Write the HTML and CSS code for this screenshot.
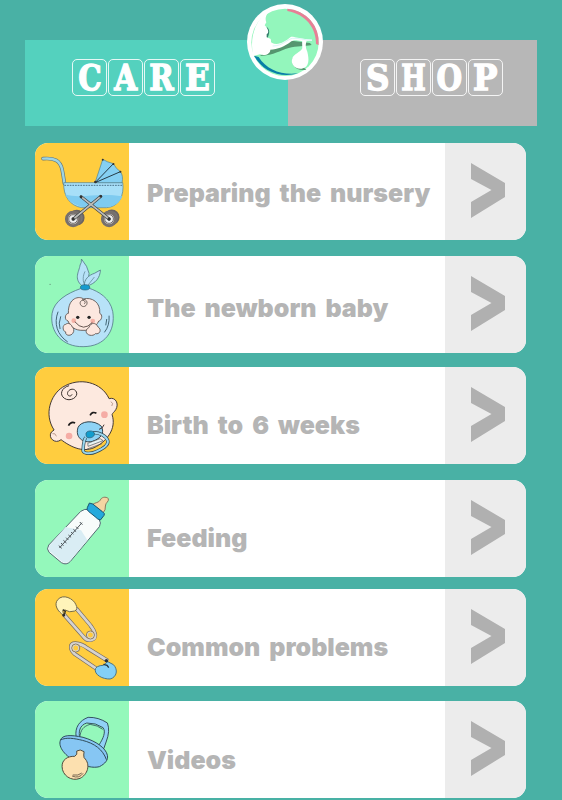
FILE: index.html
```html
<!DOCTYPE html>
<html lang="en">
<head>
    <meta charset="UTF-8">
    <meta name="viewport" content="width=device-width, initial-scale=1.0">
    <title>Baby Care</title>
    <link rel="stylesheet" href="styles.css">
</head>
<body>
    <!-- Tabs -->
    <header class="tabs">
        <a class="tab care"><span class="block"><b>C</b></span><span class="block"><b>A</b></span><span class="block"><b>R</b></span><span class="block"><b class="wide">E</b></span></a>
        <a class="tab shop"><span class="block"><b class="wide">S</b></span><span class="block"><b class="narrow">H</b></span><span class="block"><b>O</b></span><span class="block"><b class="wide">P</b></span></a>
        <svg class="logo" viewBox="21 12 228 228">
            <circle cx="135" cy="126" r="114" fill="#fff"/>
            <circle cx="135" cy="127" r="101" fill="#93f6bc"/>
            <path d="M142 26A101 101 0 0 1 236 135L228 132C229 85 198 43 142 33z" fill="#e87f96"/>
            <path d="M42 167C67 213 120 235 174 220C125 226 80 210 56 171z" fill="#087fa8"/>
            <path d="M60 168C105 166 118 151 146 144C171 137 192 140 215 135L210 129L155 122L85 148z" fill="#55966f"/>
            <path d="M158 174C150 193 170 216 199 209L181 195z" fill="#55966f"/>
            <path d="M80 80C94 91 85 107 82 116L75 109z" fill="#347c6b"/>
            <path d="M100 27C80 35 73 54 79 67L74 76C84 86 89 97 80 103L80 112L91 116C95 121 91 126 95 128C113 138 135 126 151 112C158 107 165 116 216 119L216 122L184 123C170 121 163 118 154 124C134 140 112 149 91 149C91 161 76 169 60 163L40 168C26 110 49 47 100 27z" fill="#fff"/>
            <path d="M98 138C128 138 144 116 158 115C175 113 192 121 216 120M188 122L190 146" fill="none" stroke="#d9f6f6" stroke-width="3"/>
            <path d="M187 121L200 122C195 136 198 145 202 155C207 176 210 201 185 206C163 208 151 191 157 175C161 162 181 157 187 145z" fill="#fff"/>
        </svg>
    </header>

    <!-- Topic list -->
    <main class="list">
        <a class="item first">
            <svg class="icon yellow" viewBox="13 15 283 291">
                <path d="M37 62C72 59 88 68 94 94C98 112 99 125 101 136" fill="none" stroke="#64767c" stroke-width="11" stroke-linecap="round"/>
                <path d="M37 62C72 59 88 68 94 94C98 112 99 125 101 136" fill="none" stroke="#9ed4e3" stroke-width="7" stroke-linecap="round"/>
                <circle cx="138" cy="239" r="21" fill="#777" stroke="#6c6460" stroke-width="5"/>
                <circle cx="243" cy="238" r="21" fill="#777" stroke="#6c6460" stroke-width="5"/>
                <g fill="#c7c5c3" stroke="#77706d">
                    <circle cx="127" cy="243" r="20" stroke-width="9"/>
                    <circle cx="235" cy="243" r="20" stroke-width="9"/>
                    <circle cx="127" cy="243" r="13" fill="#eee" stroke-width="3"/>
                    <circle cx="235" cy="243" r="13" fill="#eee" stroke-width="3"/>
                </g>
                <g stroke="#4d7e91" stroke-width="2">
                    <path d="M99 134H276C281 172 265 207 227 209H153C117 203 97 174 99 134z" fill="#a7dff8"/>
                    <path d="M103 169C150 184 199 163 275 175C268 194 250 207 227 207H154C129 200 111 188 103 169z" fill="#7ecbf0" stroke="none"/>
                    <path d="M193 134L216 64Q228 72 248 77Q256 93 269 101Q278 113 274 134z" fill="#85d0f3"/>
                    <path d="M193 134L248 77M193 134L269 101" stroke="#263c48" stroke-width="3"/>
                </g>
                <path d="M101 142H275" stroke="#4c718b" stroke-width="3" stroke-dasharray="5 3"/>
                <g stroke-linecap="round">
                    <path d="M151 176L235 243M210 175L128 243" stroke="#3e4446" stroke-width="9"/>
                    <path d="M151 176L235 243M210 175L128 243" stroke="#bebdb8" stroke-width="5"/>
                </g>
                <g fill="#333">
                    <circle cx="151" cy="177" r="4"/><circle cx="210" cy="175" r="4"/>
                    <circle cx="194" cy="132" r="4"/><circle cx="216" cy="65" r="3"/>
                    <circle cx="248" cy="78" r="3"/><circle cx="269" cy="101" r="3"/>
                    <circle cx="127" cy="243" r="5"/><circle cx="235" cy="243" r="5"/>
                </g>
            </svg>
            <span class="label">Preparing the nursery</span>
            <span class="arrow"><svg viewBox="0 0 34 55"><path d="M0 0L34 20V34L0 55V39L20.500 27L0 16z"/></svg></span>
        </a>

        <a class="item second">
            <svg class="icon green" viewBox="13 18 283 291">
                <g fill="#b7e2f8" stroke="#557c89" stroke-width="2.500">
                    <path d="M154 108C128 85 145 66 148 45Q153 39 152 27Q171 49 175 70Q174 92 166 108z"/>
                    <path d="M161 108C159 88 175 75 191 70L209 60C208 83 195 100 169 108z"/>
                    <path d="M149 116C109 130 70 153 64 190C56 246 95 291 157 290C223 290 255 242 246 185C238 143 202 124 176 115z"/>
                </g>
                <path d="M163 107C155 94 156 77 163 64M172 105L191 81" fill="none" stroke="#557c89" stroke-width="2"/>
                <ellipse cx="163" cy="112" rx="14" ry="8" fill="#179bce" stroke="#28627b" stroke-width="2"/>
                <path d="M82 185C68 221 80 255 111 276M90 199Q82 221 88 237M235 197Q237 227 221 247M228 207L225 226" fill="none" stroke="#426675" stroke-width="3"/>
                <g fill="#fce7df" stroke="#584c48" stroke-width="2.500">
                    <path d="M113 190C111 142 147 137 158 147C183 140 210 157 207 190C217 194 213 212 204 213C194 234 177 242 157 241C133 242 118 230 112 213C100 210 102 191 113 190z"/>
                    <path d="M105 223C111 217 122 222 124 230C130 234 131 244 126 250C119 260 102 256 105 246C94 243 95 223 105 223z"/>
                    <path d="M178 226C185 216 197 220 202 231C214 239 207 254 194 251C187 260 167 257 166 244C166 237 172 235 174 233z"/>
                </g>
                <path d="M154 148C170 145 174 164 162 169C151 173 143 158 152 152C160 148 168 157 160 162" fill="none" stroke="#544944" stroke-width="2.500"/>
                <circle cx="129" cy="212" r="7" fill="#f5b1a6"/><circle cx="186" cy="213" r="7" fill="#f5b1a6"/>
                <circle cx="141" cy="202" r="5" fill="#252525"/><circle cx="175" cy="202" r="5" fill="#252525"/>
                <path d="M132 215Q158 247 185 217" fill="none" stroke="#493b36" stroke-width="2.500"/>
                <circle cx="58" cy="103" r="2" fill="#658f79"/>
            </svg>
            <span class="label">The newborn baby</span>
            <span class="arrow"><svg viewBox="0 0 34 55"><path d="M0 0L34 20V34L0 55V39L20.500 27L0 16z"/></svg></span>
        </a>

        <a class="item third">
            <svg class="icon yellow" viewBox="13 15 283 291">
                <path d="M95 76C147 43 213 61 235 110C254 104 266 125 255 143C251 150 245 153 244 158C258 200 228 239 190 257C153 273 116 252 91 233C73 248 50 227 62 210L70 204C39 157 59 100 95 76z" fill="#fde9df" stroke="#453a35" stroke-width="3"/>
                <path d="M115 71C92 77 85 98 101 109C118 121 144 105 137 90C129 73 106 85 111 98C114 104 122 103 124 97" fill="none" stroke="#39302c" stroke-width="3"/>
                <path d="M113 191Q121 177 133 183M178 160Q185 147 197 154" fill="none" stroke="#1d1b1b" stroke-width="5"/>
                <circle cx="115" cy="222" r="10" fill="#f5aca5"/><circle cx="221" cy="158" r="10" fill="#f5aca5"/>
                <path d="M65 215Q74 212 77 223M240 119Q250 123 243 132" fill="none" stroke="#9b7468" stroke-width="2"/>
                <path d="M142 196C150 177 190 172 212 193C222 214 211 229 185 238C156 245 132 225 142 196z" fill="#8fd3f5" stroke="#31434c" stroke-width="3"/>
                <path d="M205 202Q216 200 220 188" fill="none" stroke="#433" stroke-width="3"/>
                <path d="M165 226C157 238 158 253 157 267C161 277 184 275 196 269C217 260 235 249 231 236C226 222 207 211 187 212" fill="none" stroke="#2e4652" stroke-width="10"/>
                <path d="M165 226C157 238 158 253 157 267C161 277 184 275 196 269C217 260 235 249 231 236C226 222 207 211 187 212" fill="none" stroke="#9bd7ef" stroke-width="6"/>
                <path d="M171 244L208 230L217 236L172 253zM169 261L214 245" fill="#e9f3f5" stroke="#4a5559" stroke-width="2"/>
                <path d="M166 214C168 205 188 204 191 214C192 224 182 229 171 227C166 224 165 219 166 214z" fill="#129dcd" stroke="#285367" stroke-width="2"/>
            </svg>
            <span class="label">Birth to 6 weeks</span>
            <span class="arrow"><svg viewBox="0 0 34 55"><path d="M0 0L34 20V34L0 55V39L20.500 27L0 16z"/></svg></span>
        </a>

        <a class="item fourth">
            <svg class="icon green" viewBox="13 18 283 291">
                <path d="M150 112Q162 103 174 107L204 133Q213 148 206 158L119 262Q107 275 92 266L55 235Q46 225 54 213z" fill="#f8fcfb" stroke="#526872" stroke-width="3"/>
                <path d="M104 159L151 169L170 199L118 260Q106 271 94 263L57 232Q50 224 57 214z" fill="#d9edf4"/>
                <path d="M186 91C194 85 203 87 209 78C211 70 225 66 233 74C235 84 224 85 224 96Q225 109 217 116z" fill="#f4d5a2" stroke="#8a785f" stroke-width="3"/>
                <path d="M176 87Q187 88 196 98L215 113Q224 119 220 124L209 138Q201 137 193 128L173 112Q166 106 170 100z" fill="#25a9dc" stroke="#1c536e" stroke-width="3"/>
                <path d="M86 222L154 146M84 215L93 223M91 207L98 215M98 199L107 207M106 191L113 198M113 183L121 190M121 174L128 181M128 166L136 173M136 158L143 165M147 144L155 152" fill="none" stroke="#4f575c" stroke-width="3"/>
            </svg>
            <span class="label">Feeding</span>
            <span class="arrow"><svg viewBox="0 0 34 55"><path d="M0 0L34 20V34L0 55V39L20.500 27L0 16z"/></svg></span>
        </a>

        <a class="item fifth">
            <svg class="icon yellow" viewBox="13 15 283 291">
                <path d="M99 91L158 158C171 175 197 169 193 150C191 139 184 132 179 124L136 73" fill="none" stroke="#756c65" stroke-width="12"/>
                <path d="M99 91L158 158C171 175 197 169 193 150C191 139 184 132 179 124L136 73" fill="none" stroke="#d6d3d0" stroke-width="8"/>
                <circle cx="179" cy="153" r="12" fill="#ffcb3d" stroke="#827970" stroke-width="3"/>
                <circle cx="179" cy="153" r="9" fill="none" stroke="#d6d3d0" stroke-width="3"/>
                <path d="M99 94C81 83 68 62 81 47C97 28 128 44 135 61Q143 76 132 81Q116 87 103 78L96 80z" fill="#fff4ba" stroke="#756b48" stroke-width="3"/>
                <path d="M96 77L104 82L99 95" fill="none" stroke="#39362b" stroke-width="4"/><circle cx="99" cy="94" r="4" fill="#302e29"/>
                <path d="M200 256L132 210C117 196 116 178 134 178C145 179 159 184 169 192L232 231" fill="none" stroke="#756c65" stroke-width="12"/>
                <path d="M200 256L132 210C117 196 116 178 134 178C145 179 159 184 169 192L232 231" fill="none" stroke="#d6d3d0" stroke-width="8"/>
                <circle cx="135" cy="192" r="12" fill="#ffcb3d" stroke="#827970" stroke-width="3"/>
                <circle cx="135" cy="192" r="9" fill="none" stroke="#d6d3d0" stroke-width="3"/>
                <path d="M194 254C189 272 216 286 238 285C258 280 263 257 248 242L231 233L217 244Q208 244 200 248z" fill="#83d0f7" stroke="#4c7686" stroke-width="3"/>
                <path d="M218 241L229 244L234 251M222 229L230 233" fill="none" stroke="#263943" stroke-width="4"/><circle cx="227" cy="230" r="5" fill="#28323a"/>
            </svg>
            <span class="label">Common problems</span>
            <span class="arrow"><svg viewBox="0 0 34 55"><path d="M0 0L34 20V34L0 55V39L20.500 27L0 16z"/></svg></span>
        </a>

        <a class="item sixth">
            <svg class="icon green" viewBox="13 18 283 291">
                <path d="M136 125C132 97 146 77 172 67Q203 66 230 84Q239 108 226 141L219 161L204 151C218 130 226 110 217 98Q195 83 168 84C146 91 143 110 147 130z" fill="#91d1f6" stroke="#355461" stroke-width="3"/>
                <path d="M147 129C149 104 158 94 178 88Q202 91 216 103" fill="none" stroke="#355461" stroke-width="2.500"/>
                <path d="M89 136C94 119 120 119 157 127C196 138 226 160 230 181C233 195 223 206 206 215C187 220 162 214 137 201C105 184 81 157 89 136z" fill="#86c6f3" stroke="#304d5a" stroke-width="3"/>
                <path d="M89 135C107 126 130 130 155 136C191 145 216 163 227 194" fill="none" stroke="#304d5a" stroke-width="3"/>
                <path d="M138 168Q148 161 160 170Q158 181 160 188C182 209 169 240 148 250C121 261 94 240 94 215C93 194 111 183 132 184Q141 179 138 168z" fill="#fce0af" stroke="#514b3e" stroke-width="3"/>
                <path d="M124 243Q145 252 157 235M126 240Q143 243 153 234" fill="none" stroke="#5f5140" stroke-width="2.500"/>
            </svg>
            <span class="label">Videos</span>
            <span class="arrow"><svg viewBox="0 0 34 55"><path d="M0 0L34 20V34L0 55V39L20.500 27L0 16z"/></svg></span>
        </a>
    </main>
</body>
</html>
```
FILE: styles.css
```css
* {
    box-sizing: border-box;
}

body {
    margin: 0;
    height: 800px;
    padding: 40px 25px 0;
    background: #49b1a5;
    font-family: Inter, "Liberation Sans", Arial, sans-serif;
    overflow: hidden;
}

.tabs {
    position: relative;
    display: flex;
    height: 86px;
}

.tab {
    display: flex;
    gap: 1px;
    padding-top: 19px;
    color: #fff;
}

.care {
    width: 263px;
    padding-left: 47px;
    background: #54d1be;
}

.shop {
    width: 249px;
    padding-left: 72px;
    background: #b7b7b7;
}

.block {
    display: flex;
    align-items: center;
    justify-content: center;
    width: 35px;
    height: 37px;
    border: 1.5px solid rgba(255, 255, 255, 0.85);
    border-radius: 5px;
}

.block b {
    font-family: "DejaVu Serif", serif;
    font-size: 35px;
    line-height: 35px;
    transform: scaleX(0.84);
    -webkit-text-stroke: 1.4px #fff;
}

.block .wide {
    transform: scaleX(0.93);
}

.block .narrow {
    transform: scaleX(0.74);
}

/* Badge sits over both tabs */
.logo {
    position: absolute;
    top: -36px;
    left: 222px;
    width: 76px;
    height: 76px;
}

.list {
    display: flex;
    flex-direction: column;
    padding: 17px 11px 0 9.5px;
}

.item {
    display: flex;
    flex-shrink: 0;
    height: 97px;
    border-radius: 13px;
    background: #fff;
    overflow: hidden;
}

.second {
    margin-top: 16px;
}

.third {
    margin-top: 14px;
}

.fourth {
    margin-top: 16px;
}

.fifth {
    margin-top: 12px;
}

.sixth {
    margin-top: 15px;
}

.icon {
    flex-shrink: 0;
    width: 94.5px;
    height: 97px;
}

.yellow {
    background: #ffcd3f;
}

.green {
    background: #94f8bb;
}

.label {
    flex: 1;
    padding: 43px 0 0 18px;
    color: #b5b5b5;
    font-size: 25px;
    font-weight: 900;
    line-height: 30px;
    word-spacing: 4px;
    white-space: nowrap;
}

.first .label {
    padding-top: 35px;
}

.second .label {
    padding-top: 37px;
}

.sixth .label {
    padding-top: 44px;
}

.arrow {
    flex-shrink: 0;
    width: 81px;
    padding: 20px 0 0 26px;
    background: #ececec;
}

.arrow svg {
    display: block;
    width: 34px;
    height: 55px;
    fill: #b0b0b0;
}
```
